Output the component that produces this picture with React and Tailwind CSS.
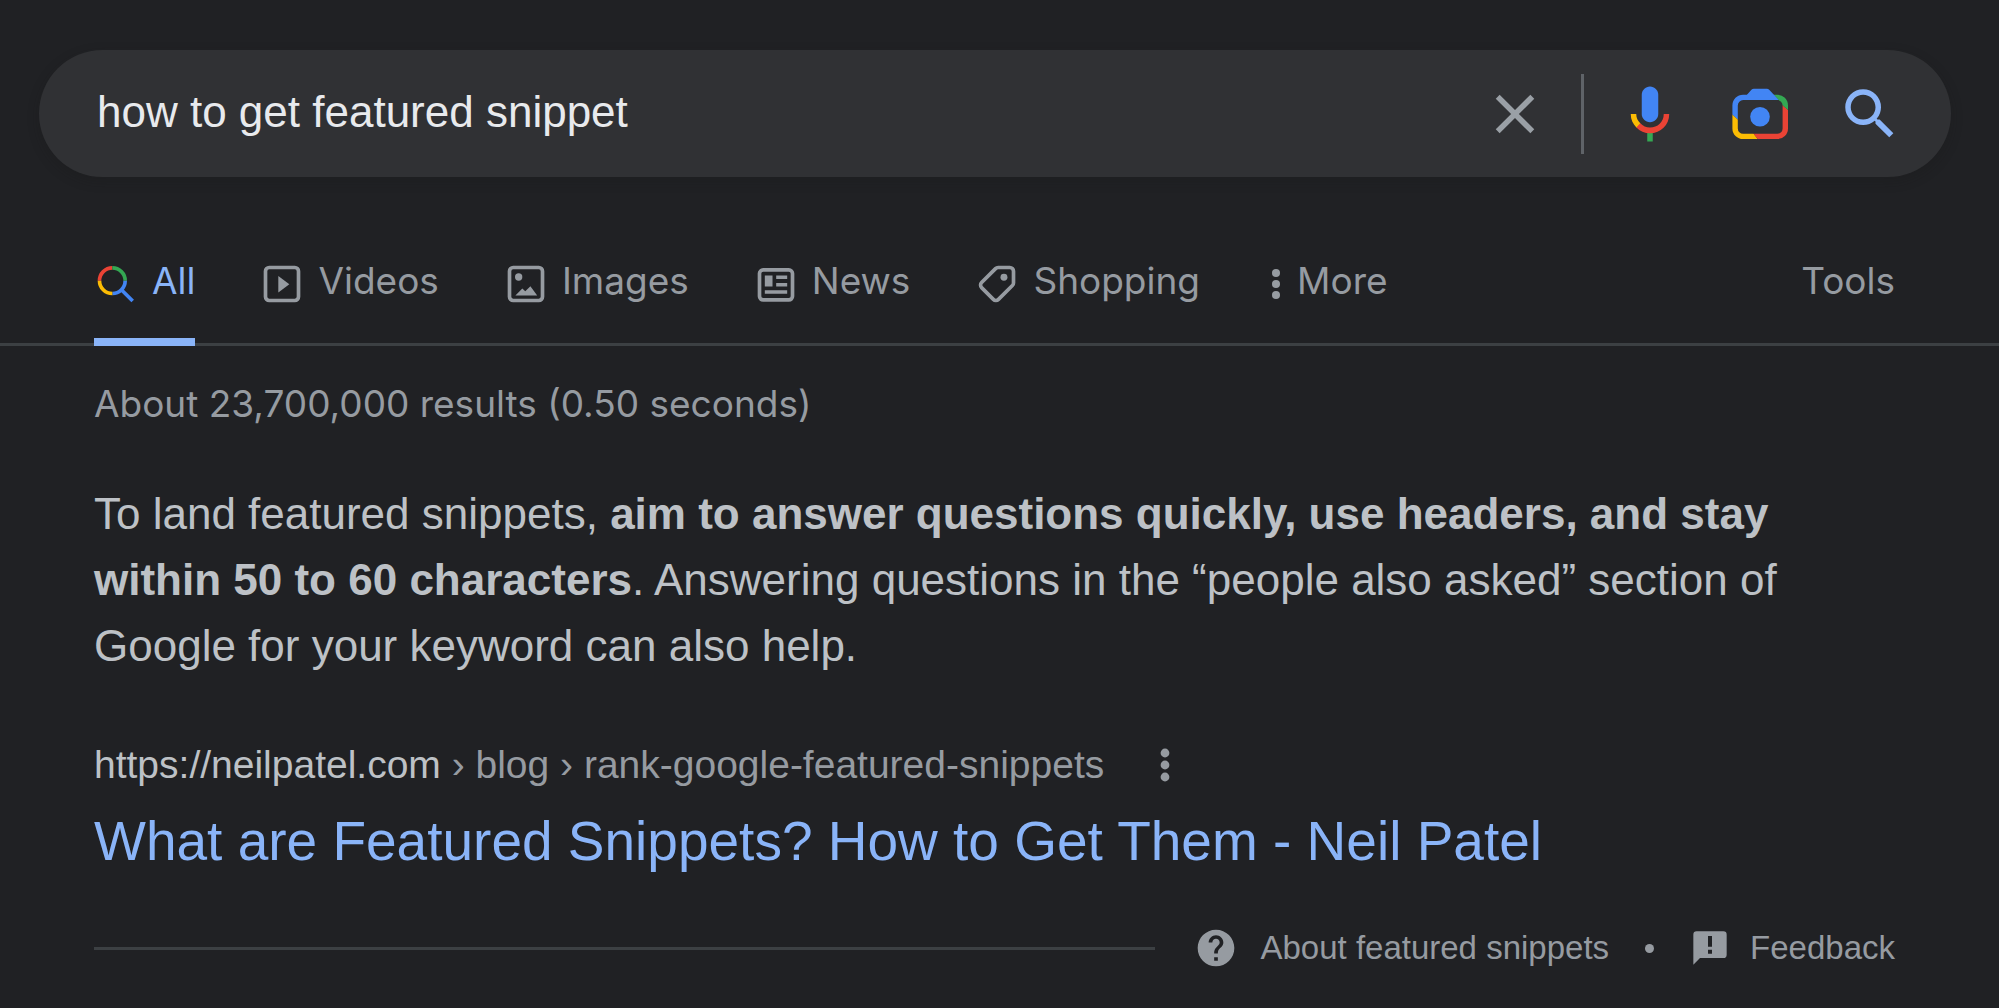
import { useState } from 'react'
import { MdClose, MdHelp, MdSearch } from 'react-icons/md'

const MicIcon = () => (
  <svg className="h-[66px] w-[66px]" viewBox="0 0 24 24" aria-hidden="true">
    <path fill="#4285f4" d="M12 15c1.66 0 3-1.31 3-2.97V5.01C15 3.34 13.66 2 12 2S9 3.34 9 5.01v7.02C9 13.69 10.34 15 12 15z" />
    <path fill="#34a853" d="M11 18.08h2V22h-2z" />
    <path fill="#fbbc04" d="M7.05 16.87C5.78 15.54 5 14.04 5 12h2c0 1.45.56 2.42 1.47 3.38v.32l-1.15 1.18z" />
    <path fill="#ea4335" d="M12 16.93a4.97 5.25 0 0 1-3.54-1.55l-1.41 1.49C8.31 18.21 10.07 19 12 19c3.87 0 6.99-2.92 6.99-7H17c0 2.92-2.24 4.93-5 4.93z" />
  </svg>
)

const LensIcon = () => (
  <svg className="h-[66px] w-[66px]" viewBox="0 0 66 66" fill="none" strokeWidth="5.4" aria-hidden="true">
    <defs>
      <clipPath id="lens-blue"><path d="M0 28L5.4 33.7 10.7 38.4 30 30 51.4 19 47 13.7 44 8 0 0z" /></clipPath>
      <clipPath id="lens-yellow"><path d="M0 28L5.4 33.7 10.7 38.4 20 45 26 52 30.7 58 33 66H0z" /></clipPath>
      <clipPath id="lens-red"><path d="M26 52L30.7 58 33 66H66V34L61 29 54.7 23.4 40 40z" /></clipPath>
      <clipPath id="lens-green"><path d="M44 8L47 13.7 51.4 19 54.7 23.4 61 29 66 34V8z" /></clipPath>
    </defs>
    <rect x="8.1" y="16.4" width="50.2" height="39" rx="8" stroke="#4285f4" clipPath="url(#lens-blue)" />
    <rect x="8.1" y="16.4" width="50.2" height="39" rx="8" stroke="#fbbc04" clipPath="url(#lens-yellow)" />
    <rect x="8.1" y="16.4" width="50.2" height="39" rx="8" stroke="#ea4335" clipPath="url(#lens-red)" />
    <rect x="8.1" y="16.4" width="50.2" height="39" rx="8" stroke="#34a853" clipPath="url(#lens-green)" />
    <path fill="#4285f4" d="M20 13.7l4.4-5q1-1 2.400-1h13q1.400 0 2.400 1l9.500 10.400H15z" />
    <circle cx="33" cy="35.7" r="9.8" fill="#4285f4" />
  </svg>
)

const AllIcon = () => (
  <svg className="h-11 w-11" viewBox="0 0 24 24" fill="none" strokeWidth="2" aria-hidden="true">
    <path stroke="#ea4335" d="M3 10.2a7 7 0 0 1 7-7" />
    <path stroke="#34a853" d="M10 3.2a7 7 0 0 1 7 7" />
    <path stroke="#4285f4" d="M17 10.2a7 7 0 0 1-7 7M14.800 15l6.300 6.300" />
    <path stroke="#fbbc04" d="M10 17.2a7 7 0 0 1-7-7" />
  </svg>
)

const VideosIcon = () => (
  <svg className="h-11 w-11" viewBox="0 0 24 24" fill="currentColor" aria-hidden="true">
    <rect x="3" y="3" width="18" height="18" rx="2" fill="none" stroke="currentColor" strokeWidth="2" />
    <path d="M10 7.7L16 12.1 10 16.6z" />
  </svg>
)

const ImagesIcon = () => (
  <svg className="h-11 w-11" viewBox="0 0 24 24" fill="currentColor" aria-hidden="true">
    <rect x="3" y="3" width="18" height="18" rx="2" fill="none" stroke="currentColor" strokeWidth="2" />
    <circle cx="8" cy="8.2" r="2" />
    <path d="M6.2 18.3L10 14.5l1.6 1.5 2.8-2.8 3.7 5.1z" />
  </svg>
)

const NewsIcon = () => (
  <svg className="h-11 w-11" viewBox="0 0 24 24" fill="currentColor" aria-hidden="true">
    <rect x="3" y="4.3" width="18" height="16.4" rx="2" fill="none" stroke="currentColor" strokeWidth="2" />
    <path d="M5.9 7.4h4.2v6H5.900zM12.1 7.4h6v1.900h-6zM12.1 11.5h6v1.900h-6zM5.9 15.4h12.2v1.900H5.900z" />
  </svg>
)

const ShoppingIcon = () => (
  <svg className="h-11 w-11" viewBox="0 0 24 24" fill="currentColor" aria-hidden="true">
    <path
      fill="none"
      stroke="currentColor"
      strokeWidth="2"
      d="M11.2 3.6a2 2 0 0 1 1.4-.6H19a2 2 0 0 1 2 2v6.4a2 2 0 0 1-.6 1.4l-7.600 7.600a2 2 0 0 1-2.800 0L3.600 14a2 2 0 0 1 0-2.800z"
    />
    <circle cx="15.800" cy="8.300" r="1.900" />
  </svg>
)

const FeedbackIcon = () => (
  <svg className="h-10 w-10" viewBox="0 0 24 24" fill="currentColor" fillRule="evenodd" aria-hidden="true">
    <path d="M20 2H4a2 2 0 0 0-2 2v18l4-4h14a2 2 0 0 0 2-2V4a2 2 0 0 0-2-2zM10.8 4.8h2.400v6.500h-2.400zM10.8 13h2.400v2.400h-2.400z" />
  </svg>
)

const DotsIcon = ({ className }) => (
  <svg className={className} viewBox="0 0 12 24" fill="currentColor" aria-hidden="true">
    <circle cx="6" cy="6" r="2.2" />
    <circle cx="6" cy="12" r="2.2" />
    <circle cx="6" cy="18" r="2.2" />
  </svg>
)

const tabs = [
  { label: 'All', Icon: AllIcon, active: true },
  { label: 'Videos', Icon: VideosIcon },
  { label: 'Images', Icon: ImagesIcon },
  { label: 'News', Icon: NewsIcon },
  { label: 'Shopping', Icon: ShoppingIcon },
]

const SearchBar = () => {
  const [query, setQuery] = useState('how to get featured snippet')

  return (
    <form
      role="search"
      onSubmit={(e) => e.preventDefault()}
      className="ml-[39px] mr-12 flex h-[127px] items-center rounded-full bg-[#303134] pl-[58px] pr-12 shadow-[0_4px_12px_rgba(23,23,23,0.25)]"
    >
      <input
        type="text"
        aria-label="Search"
        value={query}
        onChange={(e) => setQuery(e.target.value)}
        className="min-w-0 flex-1 bg-transparent pb-1 text-[44px] text-[#e8eaed] outline-none"
      />
      <button type="button" aria-label="Clear" onClick={() => setQuery('')} className="text-[#9aa0a6]">
        <MdClose className="h-[66px] w-[66px]" />
      </button>
      <div className="mx-[33px] h-20 w-[3px] bg-[#5f6368]"></div>
      <div className="flex items-center gap-11">
        <button type="button" aria-label="Search by voice">
          <MicIcon />
        </button>
        <button type="button" aria-label="Search by image">
          <LensIcon />
        </button>
        <button type="submit" aria-label="Search" className="text-[#8ab4f8]">
          <MdSearch className="h-[66px] w-[66px]" />
        </button>
      </div>
    </form>
  )
}

const Tabs = () => (
  <nav className="mt-[85px] flex items-start justify-between border-b-[3px] border-[#3c4043] pl-[94px] pr-[104px] font-['Inter',sans-serif] text-[37px] leading-[37px] text-[#969ba1]">
    <div className="-mb-[3px] flex items-start gap-[65px]">
      {tabs.map(({ label, Icon, active }) => (
        <a
          key={label}
          href="#"
          aria-current={active ? 'page' : undefined}
          className={`flex items-start gap-[14px] border-b-8 pb-8 ${active ? 'border-[#8ab4f8] text-[#8ab4f8]' : 'border-transparent'}`}
        >
          <Icon />
          <span>{label}</span>
        </a>
      ))}
      <button type="button" className="flex items-start gap-[10px]">
        <DotsIcon className="h-11 w-[22px]" />
        <span>More</span>
      </button>
    </div>
    <button type="button">Tools</button>
  </nav>
)

const FeaturedSnippet = () => (
  <article className="mt-[53px]">
    <p className="text-[44px] leading-[66px] text-[#bdc1c6]">
      To land featured snippets, <b>aim to answer questions quickly, use headers, and stay within 50 to 60 characters</b>.
      Answering questions in the “people also asked” section of Google for your keyword can also help.
    </p>
    <div className="mt-[62px] flex items-center gap-[49px] text-[#969ba1]">
      <cite className="text-[39px] leading-[48px] not-italic">
        <span className="text-[#bdc1c6]">https://neilpatel.com</span> › blog › rank-google-featured-snippets
      </cite>
      <button type="button" aria-label="About this result">
        <DotsIcon className="h-12 w-6" />
      </button>
    </div>
    <h3 className="mt-[19px] text-[55px] leading-[66px] text-[#8ab4f8]">
      <a href="#">What are Featured Snippets? How to Get Them - Neil Patel</a>
    </h3>
  </article>
)

const SnippetFooter = () => (
  <footer className="mt-[52px] flex items-center text-[33px] leading-[44px] text-[#969ba1]">
    <div className="mr-[39px] h-[3px] flex-1 bg-[#3c4043]"></div>
    <a href="#" className="flex items-center gap-[22px]">
      <MdHelp className="h-11 w-11" />
      About featured snippets
    </a>
    <div className="mx-9 h-[9px] w-[9px] rounded-full bg-[#969ba1]"></div>
    <a href="#" className="flex items-center gap-5">
      <FeedbackIcon />
      Feedback
    </a>
  </footer>
)

const App = () => (
  <div className="min-h-screen bg-[#202124] pt-[50px] font-['Liberation_Sans',Arial,sans-serif]">
    <SearchBar />
    <Tabs />
    <main className="pl-[94px] pr-[104px] pt-[34px]">
      <p className="font-['Inter',sans-serif] text-[37px] leading-[48px] text-[#969ba1]">
        About 23,700,000 results (0.50 seconds)
      </p>
      <FeaturedSnippet />
      <SnippetFooter />
    </main>
  </div>
)

export default App
